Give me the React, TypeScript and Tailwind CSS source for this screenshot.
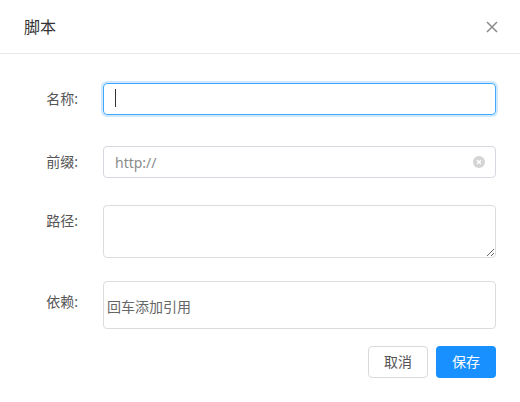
import React from "react";

const font = "font-['Noto_Sans','Noto_Sans_CJK_SC',sans-serif]";

const Label = ({ children, className = "" }: { children: React.ReactNode; className?: string }) => (
  <div className={`w-[103px] shrink-0 pr-[25px] text-right text-sm text-[#555] ${className}`}>
    {children}
  </div>
);

export default function App() {
  return (
    <div className={`w-[520px] h-[402px] bg-white ${font}`}>
      {/* Header */}
      <div className="h-[54px] flex items-center justify-between pl-6 pr-[22px] border-b border-[#e8e8e8]">
        <span className="text-base text-[#333]">脚本</span>
        <button className="w-3 h-3 flex items-center justify-center" aria-label="Close">
          <svg width="12" height="12" viewBox="0 0 12 12">
            <path d="M1 1L11 11M11 1L1 11" stroke="#8a8a8a" strokeWidth="1.5" />
          </svg>
        </button>
      </div>

      {/* Form */}
      <div className="pt-[29px] pr-6">
        {/* 名称 */}
        <div className="flex items-center">
          <Label>名称:</Label>
          <div className="relative flex-1">
            <input
              type="text"
              className="w-full h-8 px-[11px] text-sm rounded border border-[#40a9ff] shadow-[0_0_0_2px_rgba(24,144,255,0.2)] outline-none caret-transparent"
            />
            <span className="absolute left-[12px] top-[6px] w-px h-[18px] bg-[#333]" />
          </div>
        </div>

        {/* 前缀 */}
        <div className="flex items-center mt-[31px]">
          <Label>前缀:</Label>
          <div className="relative flex-1">
            <input
              type="text"
              placeholder="http://"
              className="w-full h-8 px-[11px] text-sm rounded border border-[#d5d8de] outline-none placeholder:text-[#8c8c8c]"
            />
            <span className="absolute right-[11px] top-[10px]">
              <svg width="12" height="12" viewBox="0 0 12 12">
                <circle cx="6" cy="6" r="6" fill="#d4d4d4" />
                <path d="M4 4L8 8M8 4L4 8" stroke="#fff" strokeWidth="1.3" />
              </svg>
            </span>
          </div>
        </div>

        {/* 路径 */}
        <div className="flex items-start mt-[27px]">
          <Label className="leading-8">路径:</Label>
          <textarea
            rows={2}
            className="flex-1 h-[53px] px-[11px] py-[5px] text-sm rounded border border-[#dcdcdc] outline-none resize-y"
          />
        </div>

        {/* 依赖 */}
        <div className="flex items-start mt-[23px]">
          <Label className="leading-8 pt-[5px]">依赖:</Label>
          <div className="flex-1 h-12 rounded border border-[#dcdcdc] flex items-center pl-[3px] pt-[4px] text-sm text-[#666]">
            回车添加引用
          </div>
        </div>

        {/* Actions */}
        <div className="flex justify-end gap-2 mt-[17px]">
          <button className="w-[60px] h-8 rounded border border-[#d9d9d9] bg-white text-sm text-[#555]">
            取消
          </button>
          <button className="w-[60px] h-8 rounded bg-[#1890ff] text-sm text-white">
            保存
          </button>
        </div>
      </div>
    </div>
  );
}
